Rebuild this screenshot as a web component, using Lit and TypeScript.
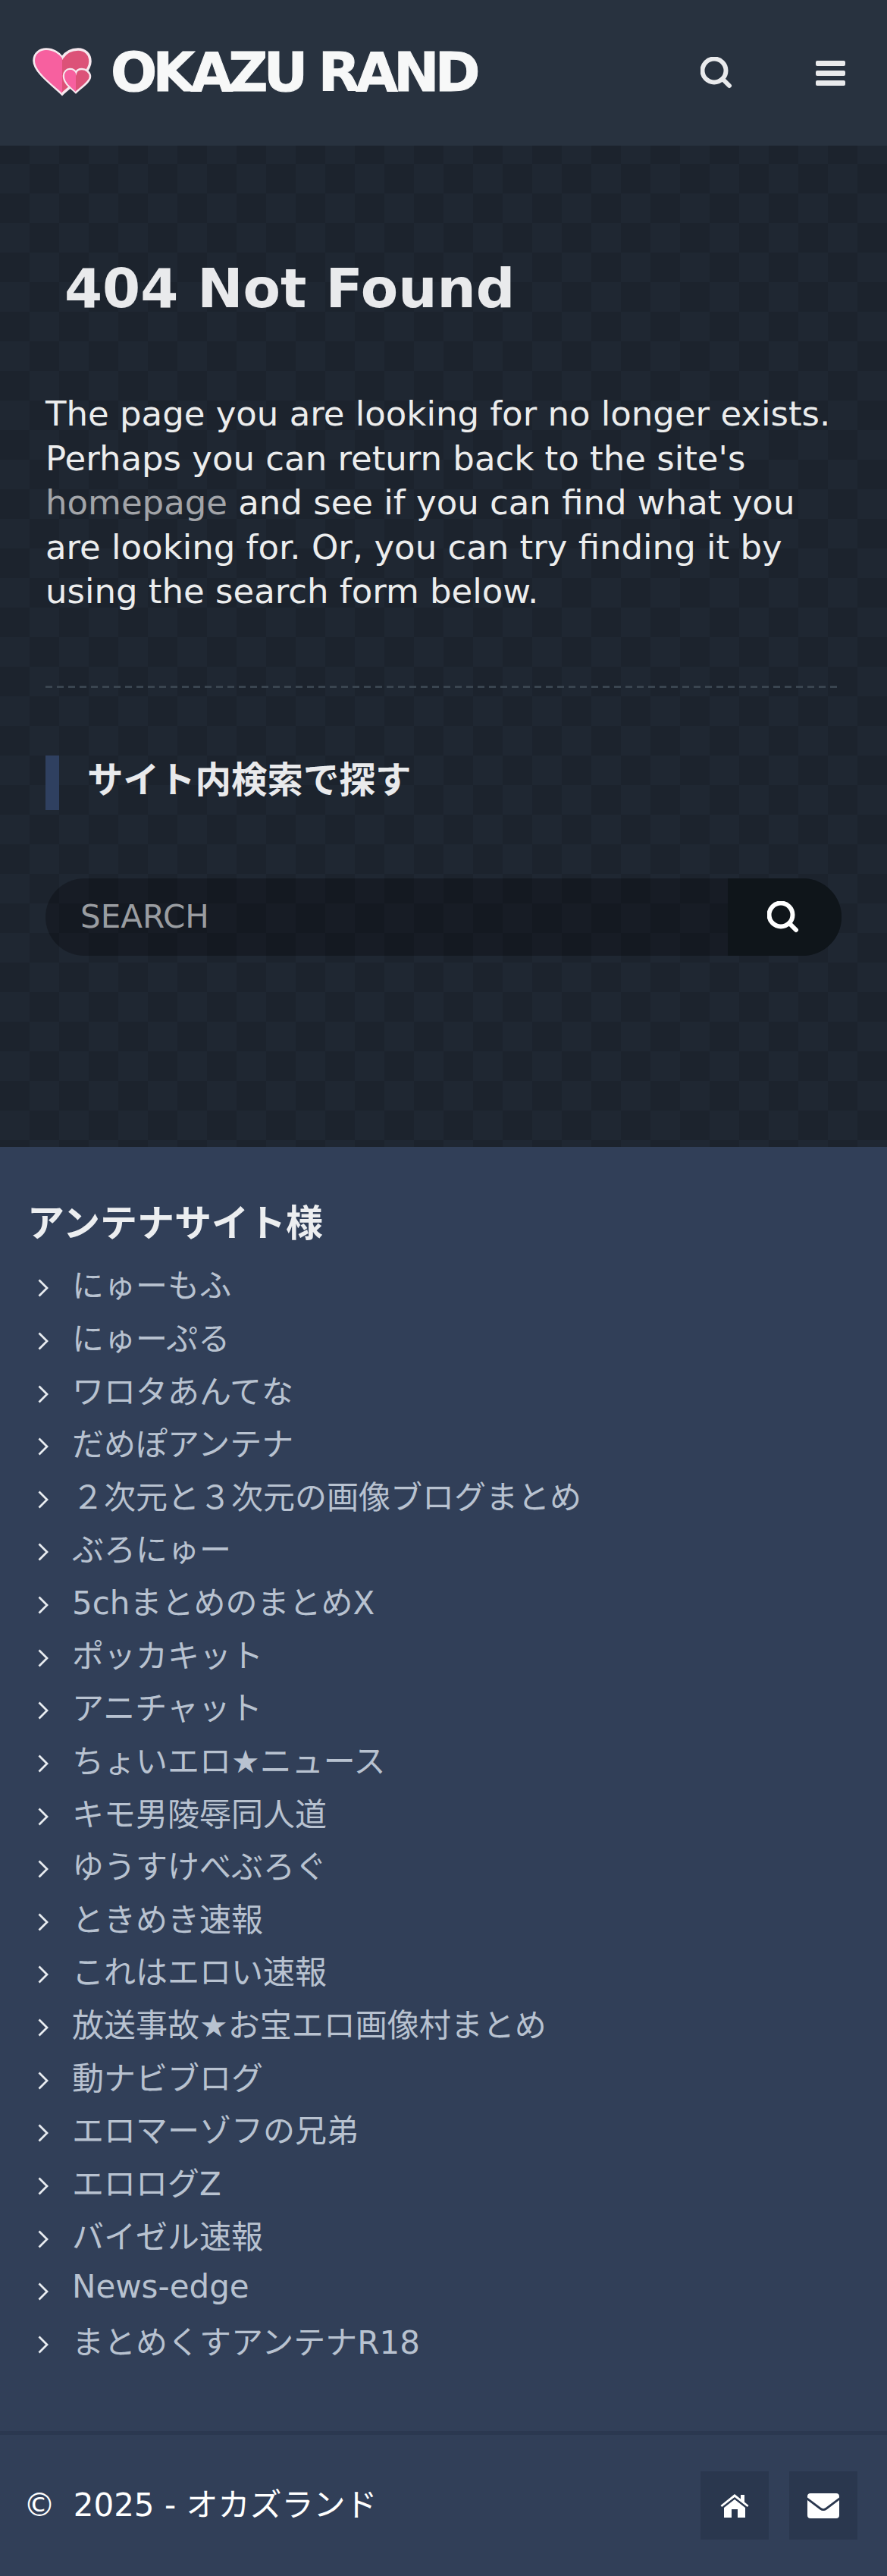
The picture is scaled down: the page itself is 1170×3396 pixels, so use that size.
import { LitElement, html, css, svg } from "lit";
import { customElement } from "lit/decorators.js";

const ANTENNA = [
  "にゅーもふ", "にゅーぷる", "ワロタあんてな", "だめぽアンテナ", "２次元と３次元の画像ブログまとめ",
  "ぶろにゅー", "5chまとめのまとめX", "ポッカキット", "アニチャット", "ちょいエロ★ニュース",
  "キモ男陵辱同人道", "ゆうすけべぶろぐ", "ときめき速報", "これはエロい速報", "放送事故★お宝エロ画像村まとめ",
  "動ナビブログ", "エロマーゾフの兄弟", "エロログZ", "バイゼル速報", "News-edge", "まとめくすアンテナR18",
];

const searchIcon = svg`<circle cx="18" cy="18" r="15.500" fill="none" stroke="currentColor" stroke-width="6"/>
  <path d="M29 29l9 9" fill="none" stroke="currentColor" stroke-width="6" stroke-linecap="round"/>`;

@customElement("app-root")
export class AppRoot extends LitElement {
  static styles = css`
    :host {
      display: block;
      width: 1170px;
      font-family: "DejaVu Sans", "Noto Sans CJK JP", sans-serif;
      color: #e9eaec;
    }
    a { color: inherit; text-decoration: none; }
    svg { display: block; }

    .top {
      height: 192px;
      background: #28323f;
      display: flex;
      align-items: center;
      padding: 0 55px 0 43px;
      box-sizing: border-box;
    }
    .logo { display: flex; align-items: center; gap: 25px; margin-right: auto; margin-top: -2px; }
    .logo-text {
      font-family: "DejaVu Sans", sans-serif;
      font-weight: 700;
      font-size: 72px;
      line-height: 60px;
      letter-spacing: -5.800px;
      -webkit-text-stroke: 1px #f7f8f8;
      color: #f7f8f8;
      white-space: nowrap;
    }
    .top-btn { color: #e9eaec; }
    .top-search { width: 42px; height: 42px; margin-right: 110px; }
    .top-menu { width: 39px; display: flex; flex-direction: column; gap: 6px; }
    .top-menu i { display: block; height: 7px; border-radius: 2px; background: #e9eaec; }

    main {
      height: 1320px;
      box-sizing: border-box;
      padding: 0 60px;
      background-color: #1e2530;
      background-image: conic-gradient(#1c232d 25%, #1f2732 0 50%, #1c232d 0 75%, #1f2732 0);
      background-size: 78px 78px;
      background-position: 0 24px;
      display: flow-root;
    }
    h1 {
      margin: 145px 0 0 25px;
      font-size: 72px;
      line-height: 86px;
      font-weight: 700;
    }
    .lead {
      margin: 94px 0 0;
      font-size: 45px;
      line-height: 58.500px;
      color: #eceded;
    }
    .lead a { color: #a2a4a8; }
    .rule {
      margin-top: 94px;
      height: 3px;
      background: repeating-linear-gradient(90deg, #3a4550 0 9px, transparent 9px 15px);
    }
    h2 {
      margin: 89px 0 0;
      height: 72px;
      box-sizing: border-box;
      border-left: 18px solid #2f4060;
      padding-left: 37px;
      font-size: 47.500px;
      line-height: 66px;
      font-weight: 700;
    }
    .search {
      margin-top: 90px;
      height: 102px;
      border-radius: 51px;
      overflow: hidden;
      display: flex;
      background: rgba(0, 0, 0, 0.26);
    }
    .search input {
      flex: 1;
      min-width: 0;
      border: 0;
      outline: 0;
      background: none;
      padding: 0 0 0 46px;
      font: inherit;
      font-size: 42px;
      color: #fff;
    }
    .search input::placeholder { color: #9a9da1; opacity: 1; }
    .search button {
      width: 150px;
      border: 0;
      padding: 0;
      background: #0f151a;
      color: #fff;
      display: flex;
      align-items: center;
      justify-content: center;
    }
    .search svg { width: 42px; height: 42px; margin-left: -4px; }

    footer {
      height: 1884px;
      box-sizing: border-box;
      background: #313f58;
      display: flex;
      flex-direction: column;
    }
    h3 {
      margin: 69px 0 0 36px;
      font-size: 49px;
      line-height: 66px;
      font-weight: 700;
      color: #eceef0;
    }
    ul { margin: 10px 0 0; padding: 0; list-style: none; }
    li {
      height: 69.640px;
      display: flex;
      align-items: center;
      padding-left: 50px;
      gap: 31px;
      font-size: 42px;
      color: #b8c2d0;
      white-space: nowrap;
    }
    li svg { width: 14px; height: 24px; flex: none; margin-top: 13px; color: #e8ecf0; }
    .copy {
      margin-top: auto;
      height: 191px;
      box-sizing: border-box;
      border-top: 5px solid #2b3850;
      display: flex;
      align-items: center;
      padding: 0 39px 0 31px;
      color: #fff;
      font-size: 42px;
    }
    .copy span { margin-right: auto; margin-top: -10px; }
    .copy b { font-weight: 400; margin-right: -3px; }
    .copy a {
      width: 90px;
      height: 90px;
      background: #2a374e;
      display: flex;
      align-items: center;
      justify-content: center;
      margin-left: 27px;
    }
  `;

  render() {
    return html`
      <header class="top">
        <a class="logo" href="#">
          <svg width="78" height="64" viewBox="0 0 78 64">
            <defs>
              <clipPath id="l"><rect width="39" height="64"/></clipPath>
              <clipPath id="s"><rect width="58" height="64"/></clipPath>
            </defs>
            <path id="big" d="M39 61C28 50 2 32 2 17 2 7 10 2 18 2c9 0 17 5 21 11 4-6 11-11 21-11 9 0 16 6 16 16 0 16-26 32-37 43z" fill="#dc5278" stroke="#f6e8ee" stroke-width="3.500"/>
            <path clip-path="url(#l)" d="M39 60C28 49 3 32 3 17 3 8 10 3 18 3c9 0 17 5 21 11v46z" fill="#f7609f"/>
            <path d="M57 59C51 53 41 47 41 37c0-5 4-9 8-9 4 0 7 2 8 5 1-3 4-5 8-5 5 0 11 4 11 10 0 7-13 15-19 21z" fill="#dc5278" stroke="#f6e8ee" stroke-width="2.500"/>
            <path clip-path="url(#s)" d="M57 58C51 52 42 46 42 37c0-4 3-8 7-8 4 0 7 2 8 5z" fill="#f7609f"/>
          </svg>
          <span class="logo-text">OKAZU RAND</span>
        </a>
        <svg class="top-btn top-search" viewBox="0 0 42 42">${searchIcon}</svg>
        <div class="top-menu"><i></i><i></i><i></i></div>
      </header>

      <main>
        <h1>404 Not Found</h1>
        <p class="lead">The page you are looking for no longer exists. Perhaps you can return back to the site's <a href="#">homepage</a> and see if you can find what you are looking for. Or, you can try finding it by using the search form below.</p>
        <div class="rule"></div>
        <h2>サイト内検索で探す</h2>
        <form class="search">
          <input placeholder="SEARCH" />
          <button type="button"><svg viewBox="0 0 42 42">${searchIcon}</svg></button>
        </form>
      </main>

      <footer>
        <h3>アンテナサイト様</h3>
        <ul>
          ${ANTENNA.map(
            (name) => html`<li>
              <svg viewBox="0 0 14 24"><path d="M1.500 1.500L12 12 1.500 22.500" fill="none" stroke="currentColor" stroke-width="2.800"/></svg>
              <a href="#">${name}</a>
            </li>`
          )}
        </ul>
        <div class="copy">
          <span><b>©</b>&nbsp; 2025 - オカズランド</span>
          <a href="#" aria-label="home">
            <svg width="38" height="31" viewBox="0 0 38 31" fill="#fff">
              <path d="M19 0L27 6.500V1h5v9.500l5.500 4.500-1.700 2L19 4 2.200 17 .5 15z"/>
              <path d="M19 7L33 18v13H23V20h-8v11H5V18z" fill-rule="evenodd"/>
            </svg>
          </a>
          <a href="#" aria-label="mail">
            <svg width="42" height="33" viewBox="0 0 42 33" fill="#fff">
              <path d="M4 0h34c2.500 0 4 1.500 4 4v1.500L24 19c-2 1.500-4 1.500-6 0L0 5.500V4c0-2.500 1.500-4 4-4z"/>
              <path d="M0 9l16.500 12.500c3 2 6 2 9 0L42 9v20c0 2.500-1.500 4-4 4H4c-2.500 0-4-1.500-4-4z"/>
            </svg>
          </a>
        </div>
      </footer>
    `;
  }
}
